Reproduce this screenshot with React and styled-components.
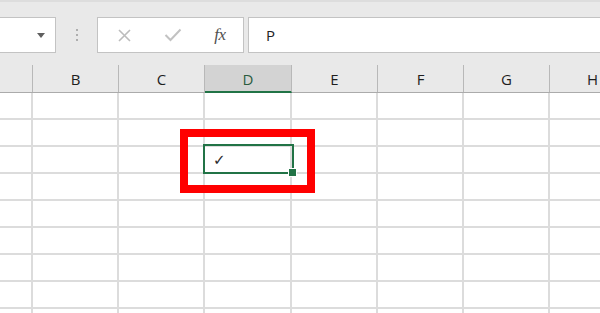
import React from "react";
import styled, { createGlobalStyle } from "styled-components";

const Global = createGlobalStyle`
  html, body { margin: 0; padding: 0; background: #ffffff; }
  body { font-family: "Open Sans", "Noto Sans", sans-serif; }
`;

const Screen = styled.div`
  position: relative;
  width: 600px;
  height: 313px;
  overflow: hidden;
  background: #ffffff;
`;

const Toolbar = styled.div`
  display: flex;
  align-items: flex-start;
  height: 65px;
  box-sizing: border-box;
  background: #e9e9e9;
  border-top: 2px solid #dddddd;
  padding-top: 15px;
`;

const Box = styled.div`
  box-sizing: border-box;
  height: 36px;
  background: #ffffff;
  border: 1px solid #c3c3c3;
  display: flex;
  align-items: center;
`;

const NameBox = styled(Box)`
  width: 57px;
  margin-left: -1px;
  justify-content: flex-end;
  padding-right: 10px;
`;

const Arrow = styled.div`
  width: 0;
  height: 0;
  border-left: 4.5px solid transparent;
  border-right: 4.5px solid transparent;
  border-top: 5px solid #5f5f5f;
`;

const Grip = styled.div`
  width: 41px;
  height: 36px;
  display: flex;
  flex-direction: column;
  align-items: center;
  justify-content: center;
  gap: 3px;
`;

const Dot = styled.span`
  width: 2px;
  height: 2px;
  border-radius: 1px;
  background: #9a9a9a;
`;

const FxBox = styled(Box)`
  width: 147px;
  padding-left: 14px;
`;

const ToolButton = styled.div`
  width: ${(p) => p.$w}px;
  height: 34px;
  display: flex;
  align-items: center;
  justify-content: center;
  color: ${(p) => p.$c};
`;

const Fx = styled.span`
  font-family: "Liberation Serif", "DejaVu Serif", serif;
  font-style: italic;
  font-size: 17px;
  color: #505050;
  letter-spacing: -0.5px;
`;

const FormulaInput = styled(Box)`
  flex: 1;
  margin-left: 4px;
  margin-right: -2px;
  padding-left: 17px;
  font-size: 15px;
  color: #222222;
`;

const HeaderRow = styled.div`
  display: flex;
  height: 28px;
  box-sizing: border-box;
  background: #e9e9e9;
  border-bottom: 1px solid #ababab;
`;

const HeaderCell = styled.div`
  flex: 0 0 ${(p) => p.$w}px;
  box-sizing: border-box;
  display: flex;
  align-items: center;
  justify-content: center;
  border-right: 1px solid #b8b8b8;
  font-size: 15px;
  color: ${(p) => (p.$active ? "#2b5c3e" : "#1e1e1e")};
  background: ${(p) => (p.$active ? "#d3d3d3" : "transparent")};
  border-bottom: ${(p) => (p.$active ? "2px solid #217346" : "none")};
  padding-top: ${(p) => (p.$active ? "2px" : "0")};
  margin-bottom: ${(p) => (p.$active ? "-1px" : "0")};
`;

const Row = styled.div`
  display: flex;
  height: 27px;
`;

const Cell = styled.div`
  flex: 0 0 ${(p) => p.$w}px;
  box-sizing: border-box;
  border-right: 2px solid #dcdcdc;
  border-bottom: 2px solid #dcdcdc;
  display: flex;
  align-items: center;
  padding-left: 8px;
  font-family: "DejaVu Sans", sans-serif;
  font-size: 15px;
  color: #2a2a2a;
`;

const Selection = styled.div`
  position: absolute;
  left: 203px;
  top: 144px;
  width: 91px;
  height: 30px;
  box-sizing: border-box;
  border: 2px solid #217346;
  pointer-events: none;
`;

const FillHandle = styled.div`
  position: absolute;
  right: -5px;
  bottom: -5px;
  width: 7px;
  height: 7px;
  background: #217346;
  border: 1px solid #ffffff;
`;

const Annotation = styled.div`
  position: absolute;
  left: 180px;
  top: 129px;
  width: 135px;
  height: 64px;
  box-sizing: border-box;
  border: 8px solid #ff0000;
  pointer-events: none;
`;

const columns = [
  { name: "", w: 33 },
  { name: "B", w: 86 },
  { name: "C", w: 86 },
  { name: "D", w: 87 },
  { name: "E", w: 86 },
  { name: "F", w: 86 },
  { name: "G", w: 86 },
  { name: "H", w: 86 },
];

const rows = Array.from({ length: 9 }, (_, i) => i);

export default function App() {
  return (
    <>
      <Global />
      <Screen>
        <Toolbar>
          <NameBox>
            <Arrow />
          </NameBox>
          <Grip>
            <Dot />
            <Dot />
            <Dot />
          </Grip>
          <FxBox>
            <ToolButton $w={24} $c="#bcbcbc">
              <svg width="13" height="13" viewBox="0 0 13 13">
                <path d="M1 1 L12 12 M12 1 L1 12" stroke="currentColor" strokeWidth="1.6" fill="none" />
              </svg>
            </ToolButton>
            <ToolButton $w={74} $c="#c2c2c2">
              <svg width="18" height="14" viewBox="0 0 18 14">
                <path d="M1.5 7 L6.5 12 L16.5 1.5" stroke="currentColor" strokeWidth="2" fill="none" />
              </svg>
            </ToolButton>
            <ToolButton $w={20} $c="#4a4a4a">
              <Fx>fx</Fx>
            </ToolButton>
          </FxBox>
          <FormulaInput>P</FormulaInput>
        </Toolbar>
        <HeaderRow>
          {columns.map((c) => (
            <HeaderCell key={c.name || "a"} $w={c.w} $active={c.name === "D"}>
              {c.name}
            </HeaderCell>
          ))}
        </HeaderRow>
        {rows.map((r) => (
          <Row key={r}>
            {columns.map((c) => (
              <Cell key={c.name || "a"} $w={c.w}>
                {r === 2 && c.name === "D" ? "✓" : ""}
              </Cell>
            ))}
          </Row>
        ))}
        <Selection>
          <FillHandle />
        </Selection>
        <Annotation />
      </Screen>
    </>
  );
}
